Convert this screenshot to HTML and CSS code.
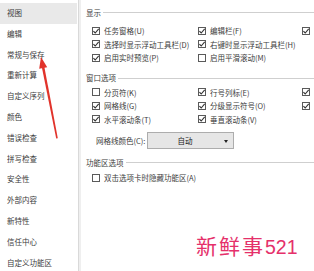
FILE: index.html
```html
<!DOCTYPE html>
<html lang="zh-CN">
<head>
<meta charset="utf-8">
<title>选项</title>
<link rel="stylesheet" href="styles.css">
</head>
<body>
<div class="window">
  <nav class="sidebar">
    <div class="nav-item selected">视图</div>
    <div class="nav-item">编辑</div>
    <div class="nav-item">常规与保存</div>
    <div class="nav-item">重新计算</div>
    <div class="nav-item">自定义序列</div>
    <div class="nav-item">颜色</div>
    <div class="nav-item">错误检查</div>
    <div class="nav-item">拼写检查</div>
    <div class="nav-item">安全性</div>
    <div class="nav-item">外部内容</div>
    <div class="nav-item">新特性</div>
    <div class="nav-item">信任中心</div>
    <div class="nav-item">自定义功能区</div>
  </nav>
  <main class="content">
    <div class="sec-head first"><span>显示</span></div>
    <div class="opts opts-1">
      <label class="opt"><span class="cb"><svg viewBox="0 0 8 8"><path d="M1.4 4.1 L3.2 6 L6.7 1.8"/></svg></span>任务窗格(U)</label>
      <label class="opt"><span class="cb"><svg viewBox="0 0 8 8"><path d="M1.4 4.1 L3.2 6 L6.7 1.8"/></svg></span>编辑栏(F)</label>
      <label class="opt"><span class="cb"><svg viewBox="0 0 8 8"><path d="M1.4 4.1 L3.2 6 L6.7 1.8"/></svg></span></label>
      <label class="opt"><span class="cb"><svg viewBox="0 0 8 8"><path d="M1.4 4.1 L3.2 6 L6.7 1.8"/></svg></span>选择时显示浮动工具栏(D)</label>
      <label class="opt"><span class="cb"><svg viewBox="0 0 8 8"><path d="M1.4 4.1 L3.2 6 L6.7 1.8"/></svg></span>右键时显示浮动工具栏(H)</label>
      <span></span>
      <label class="opt"><span class="cb"><svg viewBox="0 0 8 8"><path d="M1.4 4.1 L3.2 6 L6.7 1.8"/></svg></span>启用实时预览(P)</label>
      <label class="opt"><span class="cb"></span>启用平滑滚动(M)</label>
      <span></span>
    </div>

    <div class="sec-head second"><span>窗口选项</span></div>
    <div class="opts opts-2">
      <label class="opt"><span class="cb"></span>分页符(K)</label>
      <label class="opt"><span class="cb"><svg viewBox="0 0 8 8"><path d="M1.4 4.1 L3.2 6 L6.7 1.8"/></svg></span>行号列标(E)</label>
      <label class="opt"><span class="cb"><svg viewBox="0 0 8 8"><path d="M1.4 4.1 L3.2 6 L6.7 1.8"/></svg></span></label>
      <label class="opt"><span class="cb"><svg viewBox="0 0 8 8"><path d="M1.4 4.1 L3.2 6 L6.7 1.8"/></svg></span>网格线(G)</label>
      <label class="opt"><span class="cb"><svg viewBox="0 0 8 8"><path d="M1.4 4.1 L3.2 6 L6.7 1.8"/></svg></span>分级显示符号(O)</label>
      <label class="opt"><span class="cb"><svg viewBox="0 0 8 8"><path d="M1.4 4.1 L3.2 6 L6.7 1.8"/></svg></span></label>
      <label class="opt"><span class="cb"><svg viewBox="0 0 8 8"><path d="M1.4 4.1 L3.2 6 L6.7 1.8"/></svg></span>水平滚动条(T)</label>
      <label class="opt"><span class="cb"><svg viewBox="0 0 8 8"><path d="M1.4 4.1 L3.2 6 L6.7 1.8"/></svg></span>垂直滚动条(V)</label>
      <span></span>
    </div>
    <div class="color-row">
      <span class="color-label">网格线颜色(C):</span>
      <div class="select"><span class="select-value">自动</span><span class="select-arrow"></span></div>
    </div>

    <div class="sec-head third"><span>功能区选项</span></div>
    <div class="opts opts-3">
      <label class="opt"><span class="cb"></span>双击选项卡时隐藏功能区(A)</label>
    </div>
  </main>
</div>

<svg class="arrow" viewBox="0 0 314 271" width="314" height="271" aria-hidden="true">
  <polygon class="arrow-shaft" points="41.9,67.5 44.4,67.0 57.8,138.2 56.2,138.5"/>
  <polygon class="arrow-head" points="41,57 47.2,67.2 39.2,68.8"/>
</svg>

<div class="watermark">新鲜事<span class="wm-num">521</span></div>
</body>
</html>
```

FILE: styles.css
```css
html, body {
  margin: 0;
  padding: 0;
  width: 314px;
  height: 271px;
  overflow: hidden;
  background: #ffffff;
}

body {
  position: relative;
  font-family: "Noto Sans CJK SC", "Noto Sans", sans-serif;
  font-size: 7.5px;
  color: #3c3c3c;
}

.window {
  display: flex;
  height: 271px;
}

.sidebar {
  width: 78px;
  flex: none;
  border-right: 1px solid #d9d9d9;
  box-shadow: 2px 0 0 #efefef;
  padding-top: 3px;
  box-sizing: content-box;
}

.nav-item {
  height: 20.8px;
  line-height: 20.8px;
  padding-left: 7px;
  white-space: nowrap;
  color: #3c3c3c;
}

.nav-item.selected {
  background: #e9e9e9;
  margin-right: 1px;
}

.content {
  flex: 1;
  min-width: 0;
  overflow: hidden;
  padding-left: 7px;
  padding-top: 5px;
}

.sec-head {
  display: flex;
  align-items: center;
  height: 14px;
  white-space: nowrap;
  color: #3c3c3c;
}

.sec-head::after {
  content: "";
  flex: 1;
  height: 1px;
  background: #cfcfcf;
  margin-left: 2px;
  margin-top: 1px;
}

.sec-head.second { margin-top: 6px; }
.sec-head.third { margin-top: 6px; }

.opts {
  display: grid;
  grid-template-columns: 106px 104px 12px;
  grid-auto-rows: 13.5px;
  margin-left: 6px;
}

.opts-1 { margin-top: 5px; }
.opts-2 { margin-top: 1px; }
.opts-3 { margin-top: 2px; }

.opt {
  display: flex;
  align-items: center;
  gap: 4px;
  white-space: nowrap;
}

.cb {
  width: 8px;
  height: 8px;
  box-sizing: border-box;
  border: 1px solid #5a5a5a;
  background: #ffffff;
  flex: none;
  display: flex;
  position: relative;
}

.cb svg {
  position: absolute;
  left: -1px;
  top: -1px;
  width: 8px;
  height: 8px;
}

.cb path {
  fill: none;
  stroke: #333333;
  stroke-width: 1.1;
}

.color-row {
  display: flex;
  align-items: center;
  margin-top: 6px;
  padding-left: 10px;
  height: 17px;
  gap: 2px;
}

.color-label {
  white-space: nowrap;
}

.select {
  width: 87px;
  height: 17px;
  box-sizing: border-box;
  border: 1px solid #adadad;
  background: #e6e6e6;
  display: flex;
  align-items: center;
  position: relative;
}

.select-value {
  flex: 1;
  text-align: center;
  padding-right: 12px;
  color: #222222;
}

.select-arrow {
  position: absolute;
  right: 5px;
  top: 7px;
  width: 0;
  height: 0;
  border-left: 2.5px solid transparent;
  border-right: 2.5px solid transparent;
  border-top: 3px solid #222222;
}

.arrow {
  position: absolute;
  left: 0;
  top: 0;
  pointer-events: none;
}

.arrow-shaft, .arrow-head {
  fill: #e1332b;
}

.watermark {
  position: absolute;
  left: 196px;
  top: 233px;
  line-height: 24px;
  font-family: "Noto Sans CJK SC", sans-serif;
  font-size: 21px;
  letter-spacing: 2px;
  color: #e5306a;
  white-space: nowrap;
}

.wm-num {
  font-family: "Liberation Sans", sans-serif;
  font-size: 19.5px;
  letter-spacing: 0;
}
```
